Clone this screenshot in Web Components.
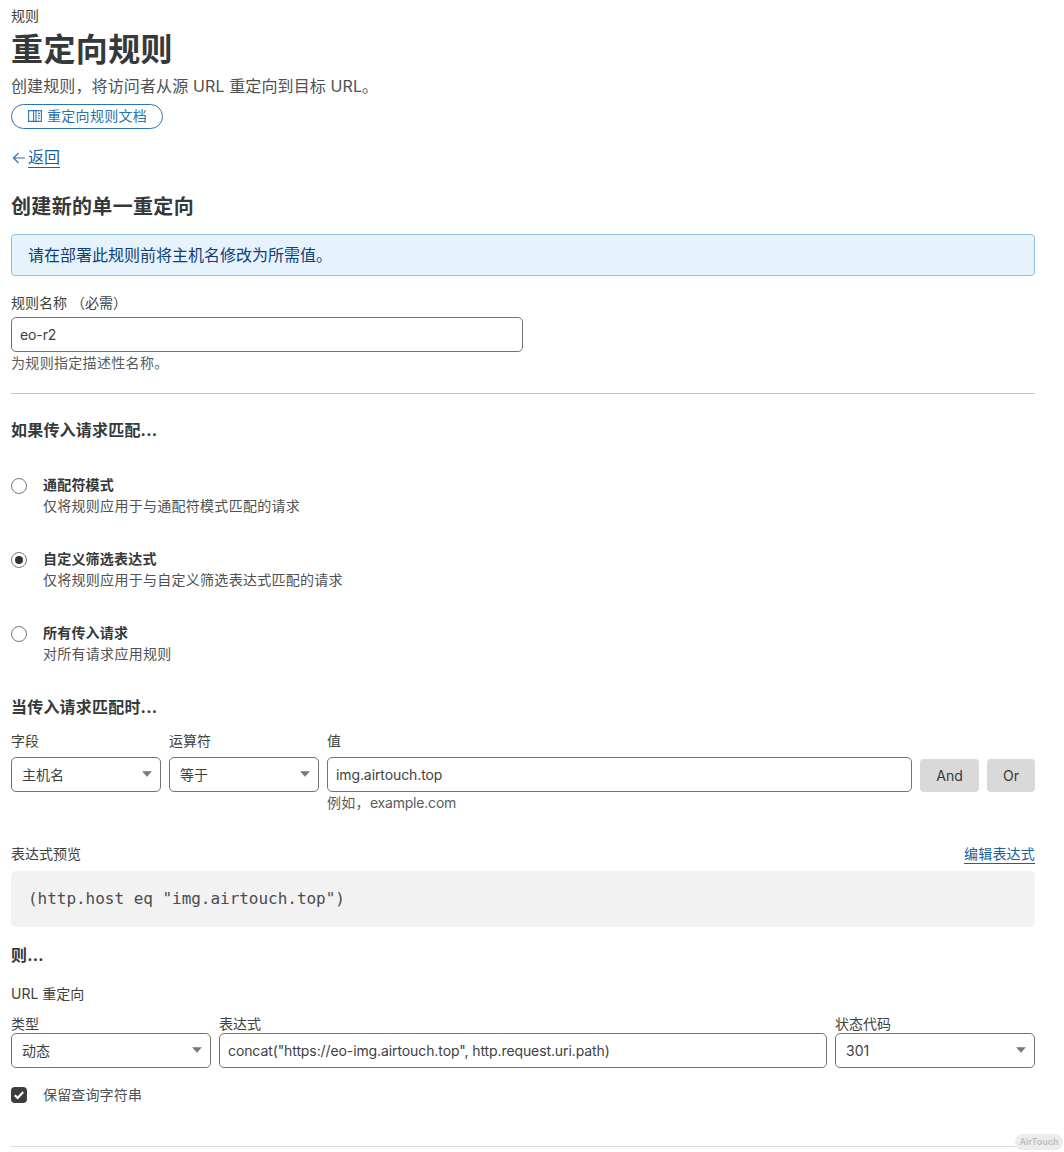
<!DOCTYPE html>
<html lang="zh-CN">
<head>
<meta charset="utf-8">
<title>重定向规则</title>
<style>
html,body{margin:0;padding:0;background:#fff;}
body{font-family:Inter,"Noto Sans CJK SC",sans-serif;color:#36393a;font-size:14px;height:1152px;overflow:hidden;}
</style>
</head>
<body>
<rule-page></rule-page>
<script>
const def=(name,css,html)=>{
  customElements.define(name,class extends HTMLElement{
    constructor(){super();const s=this.attachShadow({mode:'open'});
      s.innerHTML='<style>'+css+'</style>'+html;}
  });
};
def('form-label',':host{display:block;font-size:14px;line-height:20px;color:#404242;white-space:pre;}','<slot></slot>');
def('help-text',':host{display:block;font-size:14px;line-height:20px;color:#595b5c;letter-spacing:.32px;}','<slot></slot>');
def('section-title',':host{display:block;font-size:16px;line-height:24px;font-weight:700;color:#36393a;letter-spacing:.2px;}','<slot></slot>');
def('divider-line',':host{display:block;height:1px;background:var(--c,#c4c4c4);}','');
def('text-box',':host{display:block;box-sizing:border-box;height:35px;border:1px solid #737373;border-radius:5px;background:#fff;padding:0 8px;font-size:14px;line-height:33px;color:#404242;white-space:nowrap;overflow:hidden;letter-spacing:-.1px;}','<slot></slot>');
def('select-box',`:host{display:flex;align-items:center;justify-content:space-between;box-sizing:border-box;height:35px;border:1px solid #737373;border-radius:5px;background:#fff;padding:0 8px 2px 10px;font-size:14px;color:#404242;}
:host([latin]){padding-bottom:0;}
svg{display:block;}
:host([latin]) svg{margin-top:-2px;}`,'<slot></slot><svg width="10" height="6" viewBox="0 0 10 6" aria-hidden="true"><path d="M.7.6h8.6L5 5.4z" fill="#77797a" stroke="#77797a" stroke-width=".6" stroke-linejoin="round"/></svg>');
def('plain-button',':host{display:flex;align-items:center;justify-content:center;box-sizing:border-box;height:33px;background:#d9d9d9;border-radius:4px;font-size:14px;color:#36393a;}','<slot></slot>');
def('doc-pill',`:host{display:inline-flex;align-items:center;box-sizing:border-box;height:25px;width:152px;border:1px solid #2a76b4;border-radius:13px;padding:0 0 3px 16px;gap:5px;font-size:14px;color:#2b71ae;white-space:nowrap;letter-spacing:.3px;}
svg{display:block;flex:none;margin-top:2px;}`,'<svg width="14" height="12" viewBox="0 0 14 12" aria-hidden="true" fill="none" stroke="#2f77b8" stroke-width="1.1"><path d="M.6.6h12.8v10.8H.6z"/><path d="M5.6.6v10.8M8 .6v10.8M10 3.4h2M10 5.8h2M10 8.2h2"/></svg><slot></slot>');
def('back-link',`:host{display:flex;align-items:center;gap:1px;height:24px;font-size:16px;line-height:24px;color:#1b5f9f;}
svg{display:block;flex:none;margin-left:1px;}
span{border-bottom:1px solid #1b5f9f;line-height:19px;height:19px;margin-top:-1px;}`,'<svg width="15" height="12" viewBox="0 0 15 12" aria-hidden="true" fill="none" stroke="#2f6fa8" stroke-width="1.1"><path d="M6.5 1 1.5 6l5 5M1.5 6H13"/></svg><span><slot></slot></span>');
def('info-banner',':host{display:block;box-sizing:border-box;height:42px;background:#e6f2fc;border:1px solid #93bfdd;border-radius:4px;padding:0 16px;font-size:16px;line-height:40px;color:#0f3f78;}','<slot></slot>');
def('code-preview',':host{display:block;box-sizing:border-box;height:56px;background:#f2f2f2;border-radius:5px;padding:0 17px;font-family:"DejaVu Sans Mono",monospace;font-size:16px;line-height:55px;color:#4a4c4d;white-space:pre;letter-spacing:-.03px;}','<slot></slot>');
def('radio-option',`:host{display:grid;grid-template-columns:16px 1fr;column-gap:16px;row-gap:1px;align-items:center;}
.d{box-sizing:border-box;width:16px;height:16px;border:1px solid #77797a;border-radius:50%;display:flex;align-items:center;justify-content:center;background:#fff;margin-top:2px;}
:host([checked]) .d::after{content:"";width:8px;height:8px;border-radius:50%;background:#313335;}
.t{font-size:14px;line-height:20px;font-weight:700;color:#36393a;letter-spacing:.2px;}
.s{grid-column:2;font-size:14px;line-height:20px;color:#4f5152;letter-spacing:.28px;}`,
'<span class="d"></span><div class="t"><slot name="title"></slot></div><div class="s"><slot></slot></div>');
def('check-option',`:host{display:flex;align-items:center;gap:16px;height:20px;font-size:14px;line-height:20px;color:#4f5152;letter-spacing:.15px;}
svg{display:block;flex:none;}`,'<svg width="16" height="16" viewBox="0 0 16 16" aria-hidden="true"><rect width="16" height="16" rx="4" fill="#3b3d3f"/><path d="M3.8 8.2 6.7 11l5.5-6" fill="none" stroke="#fff" stroke-width="2.2"/></svg><slot></slot>');
def('water-mark',`:host{position:absolute;left:1015px;top:1134px;width:48px;height:16px;border-radius:8px;background:#ececec;color:#bdbdbd;font-size:9px;font-weight:600;line-height:16px;text-align:center;}`,'<slot></slot>');

def('rule-page',`
:host{display:block;position:relative;box-sizing:border-box;width:1064px;height:1152px;padding:6px 29px 0 11px;overflow:hidden;}
.crumb{font-size:14px;line-height:20px;color:#404242;}
h1{margin:4px 0 0;font-size:32px;line-height:40px;font-weight:700;color:#36393a;letter-spacing:.4px;}
.sub{margin-top:4px;font-size:16px;line-height:24px;color:#4f5152;letter-spacing:.12px;}
doc-pill{margin-top:6px;display:flex;}
back-link{margin-top:17px;}
h2{margin:23px 0 0;font-size:20px;line-height:28px;font-weight:700;color:#36393a;letter-spacing:.33px;}
info-banner{margin-top:13px;}
.name-l{margin-top:17px;}
.name-i{margin-top:4px;width:512px;}
.h1{margin-top:1px;}
.hr1{margin-top:20px;}
.s1{margin-top:24px;}
.r1{margin-top:33px;}
.s2{margin-top:31px;}
.grid1{margin-top:12px;display:grid;grid-template-columns:150px 150px 585px 59px 48px;column-gap:8px;row-gap:6px;}
.grid1 help-text{grid-column:3;margin-top:-5px;letter-spacing:0;}
.grid1 help-text span{letter-spacing:.3px;}
.grid1 help-text b{font-weight:400;letter-spacing:-.2px;}
.grid1 plain-button{margin-top:2px;}
.prev{margin-top:31px;display:flex;justify-content:space-between;}
.edit{font-size:14px;line-height:18px;color:#1b5f9f;border-bottom:1px solid #1b5f9f;height:18px;margin-top:1px;letter-spacing:.2px;}
code-preview{margin-top:7px;}
.s3{margin-top:16px;}
.url{margin-top:17px;}
.grid2{margin-top:10px;display:grid;grid-template-columns:200px 608px 200px;column-gap:8px;}
.grid2 select-box,.grid2 text-box{margin-top:-1px;}
check-option{margin-top:17px;}
.hr2{margin-top:41px;--c:#dcdcdc;}
`,`
<div class="crumb">规则</div>
<h1>重定向规则</h1>
<div class="sub">创建规则，将访问者从源 URL 重定向到目标 URL。</div>
<doc-pill>重定向规则文档</doc-pill>
<back-link>返回</back-link>
<h2>创建新的单一重定向</h2>
<info-banner>请在部署此规则前将主机名修改为所需值。</info-banner>
<form-label class="name-l">规则名称 （必需）</form-label>
<text-box class="name-i">eo-r2</text-box>
<help-text class="h1">为规则指定描述性名称。</help-text>
<divider-line class="hr1"></divider-line>
<section-title class="s1">如果传入请求匹配...</section-title>
<radio-option class="r1"><span slot="title">通配符模式</span>仅将规则应用于与通配符模式匹配的请求</radio-option>
<radio-option class="r1" checked><span slot="title">自定义筛选表达式</span>仅将规则应用于与自定义筛选表达式匹配的请求</radio-option>
<radio-option class="r1"><span slot="title">所有传入请求</span>对所有请求应用规则</radio-option>
<section-title class="s2">当传入请求匹配时...</section-title>
<div class="grid1">
  <form-label>字段</form-label><form-label>运算符</form-label><form-label style="grid-column:span 3">值</form-label>
  <select-box>主机名</select-box><select-box>等于</select-box><text-box>img.airtouch.top</text-box><plain-button>And</plain-button><plain-button>Or</plain-button>
  <help-text><span>例如，</span><b>example.com</b></help-text>
</div>
<div class="prev"><form-label>表达式预览</form-label><span class="edit">编辑表达式</span></div>
<code-preview>(http.host eq "img.airtouch.top")</code-preview>
<section-title class="s3">则...</section-title>
<form-label class="url">URL 重定向</form-label>
<div class="grid2">
  <form-label>类型</form-label><form-label>表达式</form-label><form-label>状态代码</form-label>
  <select-box>动态</select-box><text-box>concat("https://eo-img.airtouch.top", http.request.uri.path)</text-box><select-box latin>301</select-box>
</div>
<check-option>保留查询字符串</check-option>
<divider-line class="hr2"></divider-line>
<water-mark>AirTouch</water-mark>
`);
</script>
</body>
</html>
